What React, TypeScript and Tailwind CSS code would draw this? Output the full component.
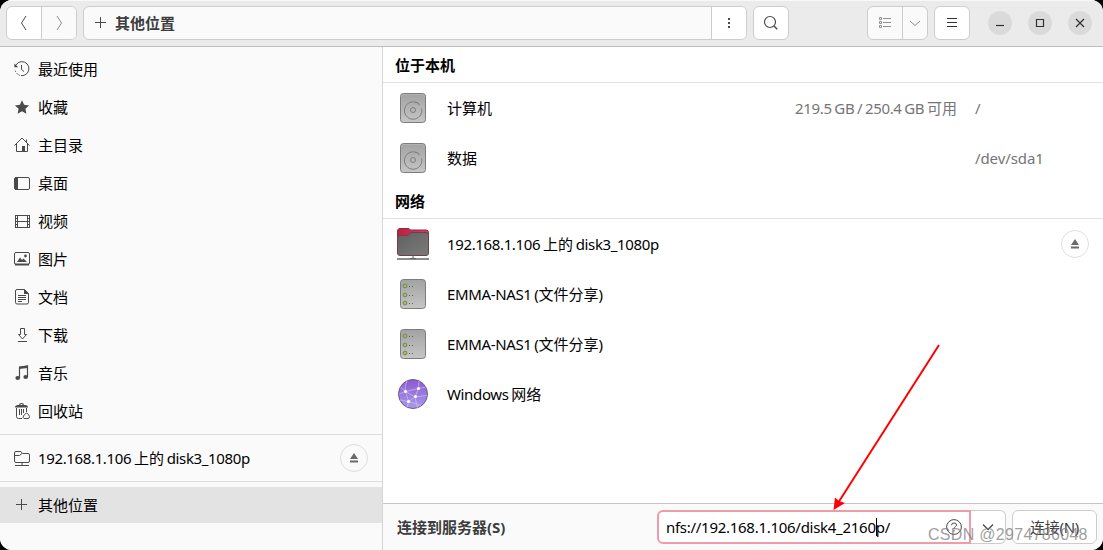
import type { ReactNode } from "react";

const ink = "#4a4a4a";

// 16px symbolic icon wrapper
function Icon({ children, className = "" }: { children: ReactNode; className?: string }) {
  return (
    <svg width="16" height="16" viewBox="0 0 16 16" fill="none" stroke={ink} className={`shrink-0 ${className}`}>
      {children}
    </svg>
  );
}

const icons: Record<string, ReactNode> = {
  recent: (
    <>
      <path d="M1.9 4.1A7 7 0 1 1 1 8.5" strokeDasharray="30 1.2 1.4 1.2 1.4 1.2 1.4 1.2 1.4" />
      <path d="M.4 2.4v3.8h3.8z" fill={ink} stroke="none" />
      <path d="M7.5 4v4.5l2.5 2" />
    </>
  ),
  star: <path d="M8 1.2l2.1 4.6 5 .6-3.7 3.4 1 5L8 12.3l-4.4 2.5 1-5L.9 6.4l5-.6z" fill={ink} stroke="none" />,
  home: (
    <>
      <path d="M.5 8.5L8 1l7.5 7.5M2.5 7v7.5h11V7M12.500 5V2.500" />
      <path d="M8 9h3v5.500H8z" fill={ink} stroke="none" />
    </>
  ),
  desktop: (
    <>
      <rect x=".5" y="2.5" width="15" height="12" rx="1.500" />
      <path d="M1 2h3v13H1z" fill={ink} stroke="none" />
    </>
  ),
  video: (
    <>
      <path d="M3.500 2v13M13.500 2v13M4 2.500h9M4 8.500h9M4 14.500h9" />
      <path d="M1.500 2v13M15.500 2v13" />
      <path d="M2.500 2v13M14.500 2v13" strokeDasharray="1 2" />
    </>
  ),
  picture: (
    <>
      <rect x=".5" y="1.500" width="15" height="12" rx="1.500" />
      <path d="M1 13.500h14" strokeWidth="2" />
      <path d="M3 11l3-4.500L8 9l1.500-1.500L13 11z" fill={ink} stroke="none" />
      <circle cx="11.500" cy="5" r="1.400" fill={ink} stroke="none" />
    </>
  ),
  document: (
    <>
      <path d="M3 .5h7.500L14.500 4.500V13.500a1.500 1.500 0 0 1-1.500 1.500H3a1.500 1.500 0 0 1-1.500-1.500V2A1.500 1.500 0 0 1 3 .5z" />
      <path d="M10 0v5h5z" fill={ink} stroke="none" />
      <path d="M4 6.500h8M4 8.500h8M4 10.500h8M4 12.500h4" />
    </>
  ),
  download: <path d="M6.500 1.500h4v6h2L8.500 12l-4-4.500h2zM4 14.500h9" />,
  music: (
    <>
      <path d="M5.500 13V2.500L13.500 1v11" strokeWidth="1.200" />
      <path d="M5 1.500L14 .5V3L5 4z" fill={ink} stroke="none" />
      <ellipse cx="3.700" cy="13" rx="2.300" ry="1.900" fill={ink} stroke="none" />
      <ellipse cx="11.700" cy="12" rx="2.300" ry="1.900" fill={ink} stroke="none" />
    </>
  ),
  trash: (
    <>
      <path d="M1 4.500Q1 2 4 2h1Q5 0 7.500 0T10 2h1q3 0 3 2.500z" fill={ink} stroke="none" />
      <path d="M6.500 1.500h2" stroke="#fafafa" />
      <path d="M2.500 5v8.500q0 2 2 2H8M5.500 6v6M7.500 6v6M9.500 6v4M12.500 5v4" />
      <path d="M10 15.500q-1.500-1-.5-2.500l1-1.500 2-1.500 2 1.500 1 2q0 2-1.500 2z" />
    </>
  ),
  remote: (
    <path d="M.5 3V11Q.5 12.500 2 12.500H14Q15.500 12.500 15.500 11V5Q15.500 3.500 14 3.500H8.500L7 1.500H2Q.5 1.500 .5 3zM1 5.500H5.500L8 3.500M8 12.500V15M1 15.500h14" />
  ),
  plus: <path d="M7.500 2v11M2 7.500h11" />,
};

const places = [
  { icon: "recent", label: "最近使用" },
  { icon: "star", label: "收藏" },
  { icon: "home", label: "主目录" },
  { icon: "desktop", label: "桌面" },
  { icon: "video", label: "视频" },
  { icon: "picture", label: "图片" },
  { icon: "document", label: "文档" },
  { icon: "download", label: "下载" },
  { icon: "music", label: "音乐" },
  { icon: "trash", label: "回收站" },
];

function EjectButton() {
  return (
    <button className="flex size-7 shrink-0 items-center justify-center rounded-full border border-[#dedede]">
      <svg width="8" height="10" viewBox="0 0 8 10" fill="#6b6b6b">
        <path d="M4 0l4 6H0zM0 7.500h8v2H0z" />
      </svg>
    </button>
  );
}

function DriveIcon() {
  return (
    <svg width="32" height="32" viewBox="0 0 32 32" fill="none">
      <defs>
        <linearGradient id="metal" x2="0" y2="1">
          <stop stopColor="#a2a2a2" />
          <stop offset="1" stopColor="#c6c6c6" />
        </linearGradient>
      </defs>
      <rect x="3.500" y="1.500" width="25" height="29" rx="3" fill="url(#metal)" stroke="#7c7c7c" />
      <path d="M4.500 5q0-2.500 2.500-2.500h18q2.500 0 2.500 2.500" stroke="#b9b9b9" strokeWidth=".7" />
      <path d="M20.500 11A8.700 8.700 0 1 0 24.600 16.500M18 10.300q4.500.2 4.200 3" stroke="#7d7d7d" />
      <circle cx="16" cy="18" r="2.500" stroke="#7d7d7d" />
    </svg>
  );
}

function ServerIcon() {
  return (
    <svg width="32" height="32" viewBox="0 0 32 32" fill="none">
      <rect x="3.500" y="1.500" width="25" height="29" rx="3" fill="url(#metal)" stroke="#7c7c7c" />
      {[8, 17, 25].map((y) => (
        <g key={y}>
          <circle cx="8" cy={y} r="1.900" fill="#9fc25b" stroke="#6f7c58" strokeWidth=".9" />
          <path d={`M12 ${y + 0.5}h1M15 ${y + 0.5}h1`} stroke="#5e5e5e" />
        </g>
      ))}
    </svg>
  );
}

function RemoteFolderIcon() {
  return (
    <svg width="32" height="34" viewBox="0 0 32 34" fill="none">
      <defs>
        <linearGradient id="folder" x2="1" y2="1">
          <stop stopColor="#606060" />
          <stop offset="1" stopColor="#7b7b7b" />
        </linearGradient>
        <linearGradient id="tab" x2="1">
          <stop stopColor="#b81f40" />
          <stop offset="1" stopColor="#e23a5b" />
        </linearGradient>
      </defs>
      <path d="M.5 4Q.5 1.500 3 1.500h8q1.500 0 2.500 1.500h15.500q2.500 0 2.500 2.500V15H.5z" fill="url(#tab)" stroke="#8f2a40" />
      <path d="M.5 11Q.5 8.500 3 8.500h7q1.500 0 2.500-1.500t2.500-1.500h14q2.500 0 2.500 2v18.500q0 2.500-2.500 2.500H3q-2.500 0-2.500-2.500z" fill="url(#folder)" stroke="#713f49" />
      <path d="M13 31.500h6M16 29v3" stroke="#555" />
      <path d="M0 32h32" stroke="#666" strokeWidth="1.500" />
    </svg>
  );
}

function NetworkIcon() {
  return (
    <svg width="32" height="32" viewBox="0 0 32 32" fill="none">
      <defs>
        <linearGradient id="globe" x2="0" y2="1">
          <stop stopColor="#8d58d2" />
          <stop offset="1" stopColor="#a99bea" />
        </linearGradient>
      </defs>
      <circle cx="16" cy="16" r="14.500" fill="url(#globe)" stroke="#6b5a8e" />
      <path
        d="M10 2.500Q7 8 8.500 13.500T12 23.500L18 19 21.500 10.500 22 3M2 16L8.500 13.500 21.500 10.500 28.500 9M8.500 13.500L18 19 30 17.500M3 22L12 23.500 24 27.500M18 19L20.500 30M12 23.500L10 29M8.500 13.500L3.500 9"
        stroke="#cdbdf3"
        strokeWidth=".7"
      />
      {[[8.5, 13.5], [21.5, 10.5], [18.5, 18.5], [11.5, 23.5]].map(([x, y]) => (
        <circle key={x} cx={x} cy={y} r="1.600" fill="#fff" />
      ))}
    </svg>
  );
}

function Label({ text }: { text: string }) {
  // Latin runs are set slightly narrower than the CJK text
  return (
    <span className="whitespace-pre">
      {text.split(/([\x20-\x7e]+)/).map((part, i) =>
        i % 2 ? (
          <span key={i} className="tracking-[-0.36px] [word-spacing:-0.8px]">{part}</span>
        ) : (
          part
        )
      )}
    </span>
  );
}

interface RowProps {
  icon: ReactNode;
  name: string;
  usage?: string;
  mount?: string;
  eject?: boolean;
}

function Row({ icon, name, usage, mount, eject }: RowProps) {
  return (
    <li className="flex h-[50px] items-center pl-3.5 pr-3.5">
      <div className="flex w-[50px] shrink-0 items-center">{icon}</div>
      <div className="flex-1"><Label text={name} /></div>
      {usage && <div className="mr-[18px] text-[#757575]"><Label text={usage} /></div>}
      {mount && <div className="w-[114px] pb-px tracking-[-0.1px] text-[#757575]">{mount}</div>}
      {eject && <EjectButton />}
    </li>
  );
}

function Heading({ children }: { children: ReactNode }) {
  return <h2 className="flex h-9 items-center border-b border-[#e1e1e1] pl-3 pt-px font-bold">{children}</h2>;
}

const button = "flex items-center justify-center border-[#cdcdcd]";

function HeaderBar() {
  return (
    <header className="flex h-[47px] shrink-0 items-start border-b border-[#bfbfbf] bg-[#ebebeb] pl-1.5 pt-1.5 shadow-[inset_0_1px_0_#f8f8f8]">
      <div className="flex h-[34px] w-[71px] overflow-hidden rounded-md border border-[#cdcdcd] bg-white">
        <button className={`${button} w-[35px] border-r`}>
          <Icon><path d="M10 1L5.500 8l4.500 7" /></Icon>
        </button>
        <button className={`${button} flex-1 bg-[#fafafa]`}>
          <Icon className="opacity-60"><path d="M6 1l4.500 7L6 15" /></Icon>
        </button>
      </div>
      <div className="ml-1.5 flex h-[34px] w-[664px] overflow-hidden rounded-md border border-[#cdcdcd] bg-[#fafafa]">
        <div className="flex flex-1 items-center gap-1.5 pl-[9px] font-bold text-[#3d3d3d]">
          <Icon>{icons.plus}</Icon>
          <span>其他位置</span>
        </div>
        <button className={`${button} w-[35px] border-l bg-white`}>
          <Icon><path d="M8 3v2M8 7v2M8 11v2" strokeWidth="2" /></Icon>
        </button>
      </div>
      <button className={`${button} ml-1.5 h-[34px] w-9 rounded-md border bg-white`}>
        <Icon><circle cx="7" cy="7" r="5.500" strokeWidth="1.200" /><path d="M11 11l3.200 3.200" strokeWidth="1.500" /></Icon>
      </button>
      <div className="ml-[78px] flex h-[34px] w-[61px] overflow-hidden rounded-md border border-[#cdcdcd] bg-[#fafafa]">
        <button className={`${button} w-[35px] border-r`}>
          <Icon className="opacity-60">
            <path d="M6 3.500h8M6 7.500h8M6 11.500h8M2.500 2.500h2v2h-2zM2.500 6.500h2v2h-2zM2.500 10.500h2v2h-2z" />
          </Icon>
        </button>
        <button className={`${button} flex-1`}>
          <Icon className="opacity-60"><path d="M3 6l5 4.500L13 6" /></Icon>
        </button>
      </div>
      <button className={`${button} ml-1.5 h-[34px] w-9 rounded-md border bg-white`}>
        <Icon><path d="M3 3.500h10M3 7.500h10M3 11.500h10" stroke="#303030" /></Icon>
      </button>
      <div className="ml-[18px] mt-[5px] flex gap-4">
        {["M4 10.500h8", "M4.500 4.500h7v7h-7z", "M4 4l8 8M12 4l-8 8"].map((d) => (
          <button key={d} className="flex size-6 items-center justify-center rounded-full bg-[#dadada]">
            <Icon><path d={d} stroke="#303030" strokeWidth="1.200" /></Icon>
          </button>
        ))}
      </div>
    </header>
  );
}

function Sidebar() {
  return (
    <aside className="flex w-[383px] shrink-0 flex-col border-r border-[#d5d5d5] bg-[#fafafa] pt-[3px]">
      <ul>
        {places.map((p) => (
          <li key={p.label} className="flex h-[38px] items-center gap-2 pl-3.5">
            <Icon>{icons[p.icon]}</Icon>
            <span>{p.label}</span>
          </li>
        ))}
      </ul>
      <div className="mt-1 flex h-12 items-center gap-2 border-y border-[#dedede] pl-3.5 pr-3.5">
        <Icon>{icons.remote}</Icon>
        <div className="flex-1"><Label text="192.168.1.106 上的 disk3_1080p" /></div>
        <EjectButton />
      </div>
      <div className="mt-[5px] flex h-9 items-center gap-2 bg-[#e3e3e3] pl-3.5">
        <Icon>{icons.plus}</Icon>
        <span>其他位置</span>
      </div>
    </aside>
  );
}

function ConnectBar() {
  return (
    <footer className="flex h-[47px] shrink-0 items-center border-t border-[#c6c6c6] bg-[#fafafa] pl-3.5 pr-1.5">
      <div className="flex-1 font-bold text-[#3d3d3d]">连接到服务器(S)</div>
      <div className="flex h-[34px] w-[314px] items-center rounded-l-md border-2 border-[#ee9bab] bg-white pl-[7px] pr-[7px] tracking-[-0.28px]">
        <span>nfs://192.168.1.106/disk4_2160</span>
        <span className="-mr-px h-[18px] w-px bg-black" />
        <span className="flex-1">p/</span>
        <Icon>
          <circle cx="8" cy="8" r="7.400" />
          <path d="M5.500 6.300q0-2.300 2.500-2.300t2.500 2q0 1-1.200 1.800T8 10M8 11v1.500" />
        </Icon>
      </div>
      <button className={`${button} h-[34px] w-[35px] rounded-r-md border border-l-0 bg-white`}>
        <Icon><path d="M3 5.500l5 5 5-5" strokeWidth="1.300" /></Icon>
      </button>
      <button className={`${button} ml-1.5 h-[34px] w-[85px] rounded-md border bg-white tracking-[-0.3px] text-[#3d3d3d]`}>
        连接(N)
      </button>
    </footer>
  );
}

export default function App() {
  return (
    <div className="relative h-[550px] w-[1103px] bg-black font-['Noto_Sans','Noto_Sans_CJK_SC',sans-serif] text-[15px] leading-5 text-black">
      <div className="flex h-full flex-col overflow-hidden rounded-xl bg-white">
        <HeaderBar />
        <div className="flex min-h-0 flex-1">
          <Sidebar />
          <main className="flex flex-1 flex-col">
            <Heading>位于本机</Heading>
            <ul>
              <Row icon={<DriveIcon />} name="计算机" usage="219.5 GB / 250.4 GB 可用" mount="/" />
              <Row icon={<DriveIcon />} name="数据" mount="/dev/sda1" />
            </ul>
            <Heading>网络</Heading>
            <ul className="flex-1">
              <Row icon={<RemoteFolderIcon />} name="192.168.1.106 上的 disk3_1080p" eject />
              <Row icon={<ServerIcon />} name="EMMA-NAS1 (文件分享)" />
              <Row icon={<ServerIcon />} name="EMMA-NAS1 (文件分享)" />
              <Row icon={<NetworkIcon />} name="Windows 网络" />
            </ul>
            <ConnectBar />
          </main>
        </div>
      </div>

      {/* Annotation arrow */}
      <svg width="110" height="168" viewBox="0 0 110 168" className="absolute left-[831px] top-[343px]">
        <path d="M108 2L7 160" stroke="#f00" strokeWidth="2" />
        <path d="M2.500 167L4 154.500l4 3.500 6 2z" fill="#f00" />
      </svg>
      <div className="absolute left-[928px] top-[525px] font-['Liberation_Sans',sans-serif] text-base leading-5 tracking-[0.3px] text-[#777] opacity-70">
        CSDN @2974786048
      </div>
    </div>
  );
}
